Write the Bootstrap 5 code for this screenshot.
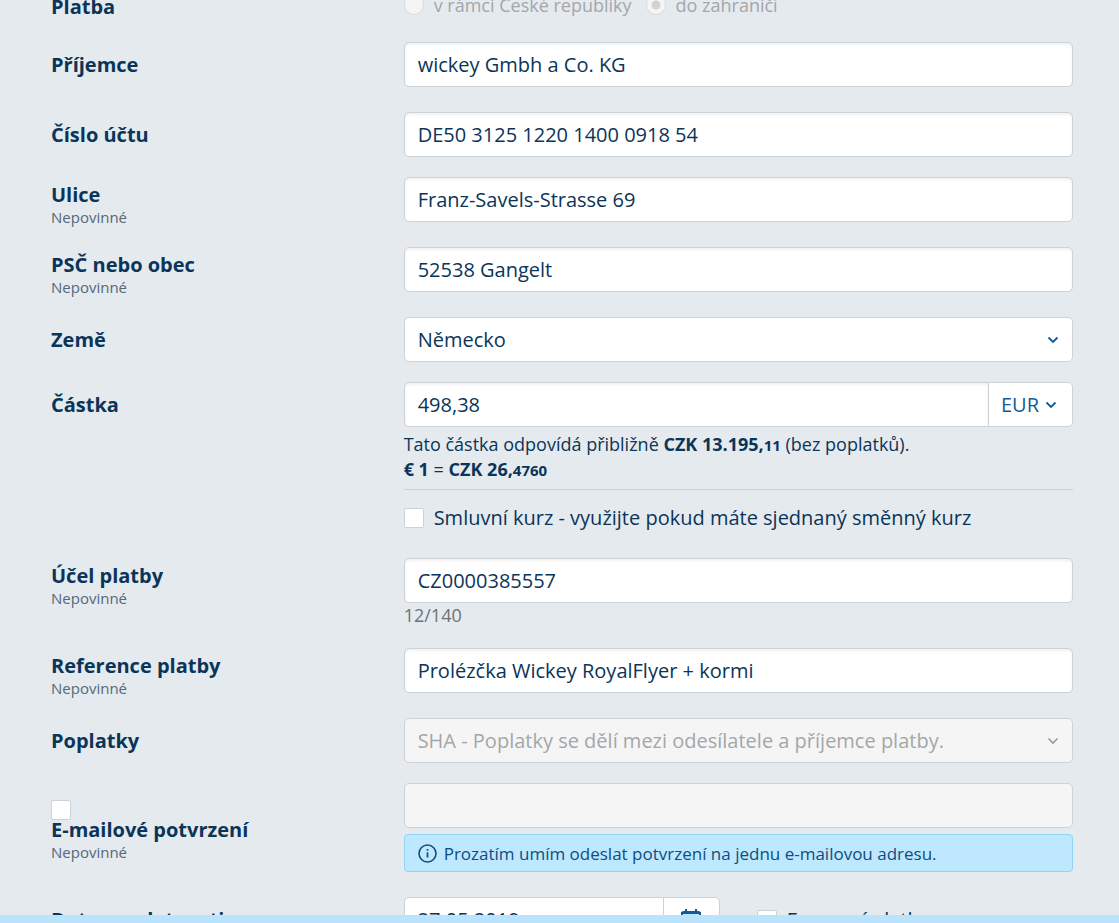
<!DOCTYPE html>
<html lang="cs">
<head>
<meta charset="utf-8">
<meta name="viewport" content="width=device-width, initial-scale=1">
<title>Platba do zahraničí</title>
<link href="https://cdn.jsdelivr.net/npm/bootstrap@5.3.0/dist/css/bootstrap.min.css" rel="stylesheet">
<style>
  body { background: #e5eaee; color: #0b3558; font-family: "Open Sans", "Noto Sans", sans-serif; font-size: 20px; line-height: 25px; }
  .pay-form { padding: 0 46px 0 51px; margin-top: -16px; }
  .pay-row { --bs-gutter-x: 36px; margin-bottom: 20px; }
  .pay-row.roomy { margin-bottom: 25px; }
  .caption { padding-top: 10px; }
  .caption label, .caption .title { display: block; font-weight: 700; }
  .caption.two-line { padding-top: 5px; }
  .caption small { display: block; font-size: 15px; line-height: 20px; color: #57677a; }
  .caption.ticked { padding-top: 17px; }
  .caption.ticked .form-check-input { margin-bottom: -3px; }
  .form-control, .form-select { height: 45px; padding: 0 13px; border: 1px solid #cbd3da; border-radius: 5px; font-size: 20px; line-height: 25px; color: #0b3558; background-color: #fff; }
  .form-control { box-shadow: inset 0 2px 3px rgba(0, 0, 0, .06); }
  .form-select { background-image: url("data:image/svg+xml,%3Csvg xmlns='http://www.w3.org/2000/svg' viewBox='0 0 12 8'%3E%3Cpath d='M1.5 1.5 6 6l4.5-4.5' fill='none' stroke='%23135a96' stroke-width='1.8'/%3E%3C/svg%3E"); background-size: 12px 8px; background-position: right 13px center; }
  .form-control:disabled, .form-select:disabled { background-color: #f5f5f5; color: #a3a7aa; opacity: 1; box-shadow: none; }
  .form-select:disabled { background-image: url("data:image/svg+xml,%3Csvg xmlns='http://www.w3.org/2000/svg' viewBox='0 0 12 8'%3E%3Cpath d='M1.5 1.5 6 6l4.5-4.5' fill='none' stroke='%23999' stroke-width='1.6'/%3E%3C/svg%3E"); }
  .currency { flex: 0 0 85px !important; padding: 0 12px; color: #135a96; background-position: right 15px center; }
  .form-check-input { flex: none; width: 20px; height: 20px; margin: 0; border: 1px solid #cbd3da; background-color: #fff; }
  .form-check-input[type=checkbox] { border-radius: 2px; }
  .form-check-input[type=radio]:disabled { opacity: 1; background-color: #f5f5f5; border-color: #d8dcdf; }
  .form-check-input[type=radio]:disabled ~ label { opacity: 1; }
  .form-check-input[type=radio]:checked { background-image: url("data:image/svg+xml,%3Csvg xmlns='http://www.w3.org/2000/svg' viewBox='0 0 20 20'%3E%3Ccircle cx='10' cy='10' r='5' fill='%23d2d2d2'/%3E%3C/svg%3E"); }
  .choice { gap: 10px; }
  .choices { height: 42px; gap: 14px; color: #a3a7aa; font-size: 18px; }
  .rate { padding: 5px 0 7px; border-bottom: 1px solid #cbd3da; font-size: 18px; }
  .rate .cents { font-size: 15px; line-height: 1; }
  .agreed { padding: 15px 0 8px; }
  .counter { font-size: 18px; color: #6c7378; }
  .notice { margin-top: 6px; height: 38px; padding: 0 13px; gap: 7px; border: 1px solid #8fd3f5; border-radius: 4px; background: #bde8ff; color: #0f4d7d; font-size: 17px; }
  .due-group { width: 316px; }
  .due-group .form-select { background-position: right 20px center; }
  .day-button { width: 57px; padding: 0; border: 1px solid #cbd3da; border-radius: 5px; background: #fff; color: #135a96; }
  .express { margin-left: 37px; }
  .bottom-strip { height: 8px; background: #bae4fd; }
</style>
</head>
<body class="d-flex flex-column vh-100 overflow-hidden">
<main class="flex-fill overflow-hidden">
<form class="pay-form">
  <div class="row pay-row mb-0">
    <div class="col-4 caption"><span class="title" id="kind">Platba</span></div>
    <div class="col-8">
      <div class="choices d-flex align-items-center" role="radiogroup" aria-labelledby="kind">
        <div class="choice d-flex align-items-center"><input class="form-check-input" type="radio" name="kind" id="home" disabled><label for="home">v rámci České republiky</label></div>
        <div class="choice d-flex align-items-center"><input class="form-check-input" type="radio" name="kind" id="abroad" checked disabled><label for="abroad">do zahraničí</label></div>
      </div>
    </div>
  </div>
  <div class="row pay-row roomy pt-3">
    <div class="col-4 caption"><label for="payee">Příjemce</label></div>
    <div class="col-8"><input class="form-control" id="payee" type="text" value="wickey Gmbh a Co. KG"></div>
  </div>
  <div class="row pay-row">
    <div class="col-4 caption"><label for="account">Číslo účtu</label></div>
    <div class="col-8"><input class="form-control" id="account" type="text" value="DE50 3125 1220 1400 0918 54"></div>
  </div>
  <div class="row pay-row">
    <div class="col-4 caption two-line"><label for="street">Ulice</label><small>Nepovinné</small></div>
    <div class="col-8"><input class="form-control" id="street" type="text" value="Franz-Savels-Strasse 69"></div>
  </div>
  <div class="row pay-row">
    <div class="col-4 caption two-line"><label for="town">PSČ nebo obec</label><small>Nepovinné</small></div>
    <div class="col-8"><input class="form-control" id="town" type="text" value="52538 Gangelt"></div>
  </div>
  <div class="row pay-row">
    <div class="col-4 caption"><label for="country">Země</label></div>
    <div class="col-8"><select class="form-select" id="country"><option>Německo</option></select></div>
  </div>
  <div class="row pay-row">
    <div class="col-4 caption"><label for="amount">Částka</label></div>
    <div class="col-8">
      <div class="input-group">
        <input class="form-control" id="amount" type="text" value="498,38">
        <select class="form-select currency" aria-label="Měna"><option>EUR</option></select>
      </div>
      <div class="rate">
        <div>Tato částka odpovídá přibližně <b>CZK 13.195,<span class="cents">11</span></b> (bez poplatků).</div>
        <div><b>€ 1</b> = <b>CZK 26,<span class="cents">4760</span></b></div>
      </div>
      <div class="agreed choice d-flex align-items-center"><input class="form-check-input" type="checkbox" id="agreed"><label for="agreed">Smluvní kurz - využijte pokud máte sjednaný směnný kurz</label></div>
    </div>
  </div>
  <div class="row pay-row">
    <div class="col-4 caption two-line"><label for="purpose">Účel platby</label><small>Nepovinné</small></div>
    <div class="col-8"><input class="form-control" id="purpose" type="text" value="CZ0000385557"><div class="counter">12/140</div></div>
  </div>
  <div class="row pay-row">
    <div class="col-4 caption two-line"><label for="reference">Reference platby</label><small>Nepovinné</small></div>
    <div class="col-8"><input class="form-control" id="reference" type="text" value="Prolézčka Wickey RoyalFlyer + kormi"></div>
  </div>
  <div class="row pay-row">
    <div class="col-4 caption"><label for="fees">Poplatky</label></div>
    <div class="col-8"><select class="form-select" id="fees" disabled><option>SHA - Poplatky se dělí mezi odesílatele a příjemce platby.</option></select></div>
  </div>
  <div class="row pay-row roomy">
    <div class="col-4 caption ticked"><input class="form-check-input d-block" type="checkbox" id="confirm"><label for="confirm">E-mailové potvrzení</label><small>Nepovinné</small></div>
    <div class="col-8">
      <input class="form-control" type="email" aria-label="E-mailová adresa" disabled>
      <div class="notice d-flex align-items-center">
        <svg width="19" height="19" viewBox="0 0 19 19" fill="none" stroke="currentColor" aria-hidden="true"><circle cx="9.500" cy="9.500" r="8.500" stroke-width="1.600"/><path d="M9.500 8.200v5.300M9.500 5v1.800" stroke-width="1.700"/></svg>
        <span>Prozatím umím odeslat potvrzení na jednu e-mailovou adresu.</span>
      </div>
    </div>
  </div>
  <div class="row pay-row">
    <div class="col-4 caption"><label for="due">Datum splatnosti</label></div>
    <div class="col-8 d-flex align-items-center">
      <div class="input-group due-group">
        <select class="form-select" id="due"><option>27.05.2019</option></select>
        <button class="day-button" type="button" aria-label="Vybrat datum">
          <svg width="24" height="24" viewBox="0 0 24 24" fill="none" stroke="currentColor" stroke-width="2" aria-hidden="true"><rect x="3" y="3" width="18" height="19" rx="2"/><path d="M3 4h18v4H3z" fill="#c4e6fa"/><path d="M7 0v4M17 0v4"/></svg>
        </button>
      </div>
      <div class="express choice d-flex align-items-center"><input class="form-check-input" type="checkbox" id="express"><label for="express">Expresní platba</label></div>
    </div>
  </div>
</form>
</main>
<footer class="bottom-strip flex-shrink-0"></footer>
<script src="https://cdn.jsdelivr.net/npm/bootstrap@5.3.0/dist/js/bootstrap.bundle.min.js"></script>
</body>
</html>
